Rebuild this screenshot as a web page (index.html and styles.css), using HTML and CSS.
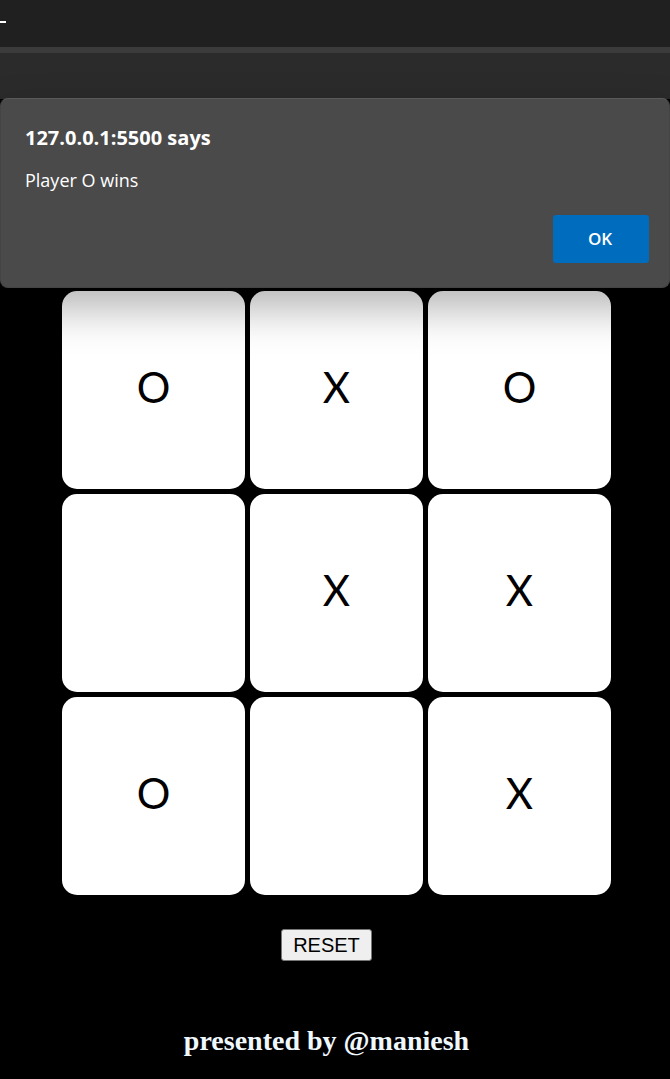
FILE: index.html
```
<!DOCTYPE html>
<html lang="en">
<head>
<meta charset="utf-8">
<meta name="viewport" content="width=device-width, initial-scale=1">
<title>Tic Tac Toe</title>
<link rel="stylesheet" href="styles.css">
</head>
<body>
<header class="chrome">
  <div class="titlebar"><span class="minimize"></span></div>
  <div class="toolbar"></div>
</header>
<dialog class="alert" open aria-labelledby="alert-title">
  <h1 class="alert-title" id="alert-title">127.0.0.1:5500 says</h1>
  <p class="alert-text">Player O wins</p>
  <div class="alert-actions"><button class="ok" type="button">OK</button></div>
</dialog>
<main class="game">
  <div class="board">
    <button class="cell" type="button">O</button>
    <button class="cell" type="button">X</button>
    <button class="cell" type="button">O</button>
    <button class="cell" type="button" aria-label="Empty"></button>
    <button class="cell" type="button">X</button>
    <button class="cell" type="button">X</button>
    <button class="cell" type="button">O</button>
    <button class="cell" type="button" aria-label="Empty"></button>
    <button class="cell" type="button">X</button>
  </div>
  <div class="controls"><button class="reset" type="button">RESET</button></div>
</main>
<footer class="credit">presented by @maniesh</footer>
</body>
</html>
```
FILE: styles.css
```
* {
  box-sizing: border-box;
}

body {
  margin: 0;
  background: #000;
  color: #fff;
  font-family: "Liberation Serif", serif;
}

.titlebar {
  height: 47px;
  padding-top: 21px;
  background: #202020;
}

.minimize {
  display: block;
  width: 6px;
  height: 2px;
  background: #fff;
}

.toolbar {
  height: 52px;
  border-top: 6px solid #3b3b3b;
  background: #2b2b2b;
}

.alert {
  position: absolute;
  top: 98px;
  left: 0;
  width: 100%;
  margin: 0;
  padding: 24px 20px 24px 24px;
  border: 1px solid #444;
  border-top-color: #5a5a5a;
  border-radius: 8px;
  background: #4a4a4a;
  color: #fff;
  box-shadow: 0 20px 44px rgba(0, 0, 0, 0.3);
  font-family: "Open Sans", "Noto Sans", sans-serif;
}

.alert-title {
  margin: 0;
  font-size: 20px;
  font-weight: 700;
  line-height: 30px;
}

.alert-text {
  margin: 12px 0 20px;
  font-size: 18px;
  line-height: 30px;
}

.alert-actions {
  display: flex;
  justify-content: flex-end;
}

.ok {
  width: 96px;
  height: 48px;
  padding: 0 2px 2px 0;
  border: 0;
  border-radius: 3px;
  background: #006cbe;
  color: #fff;
  font: 600 17px "Open Sans", "Noto Sans", sans-serif;
}

.game {
  padding: 192px 59px 0 62px;
}

.board {
  display: grid;
  grid-template-columns: 183fr 173fr 183fr;
  grid-auto-rows: 198px;
  gap: 5px;
}

.cell {
  min-width: 0;
  padding: 0 0 6px;
  border: 0;
  border-radius: 15px;
  background: #fff;
  color: #000;
  font: 400 42px Lato, sans-serif;
}

.controls {
  display: flex;
  justify-content: center;
  padding: 34px 20px 0 0;
}

.reset {
  height: 32px;
  padding: 0 11px;
  border: 1px solid #767676;
  border-radius: 3px;
  background: #efefef;
  color: #000;
  font: 20px "Liberation Sans", Arial, sans-serif;
}

.credit {
  padding: 64px 17px 20px 0;
  color: #f0f8ff;
  font-size: 28px;
  font-weight: 700;
  line-height: 32px;
  text-align: center;
}
```
